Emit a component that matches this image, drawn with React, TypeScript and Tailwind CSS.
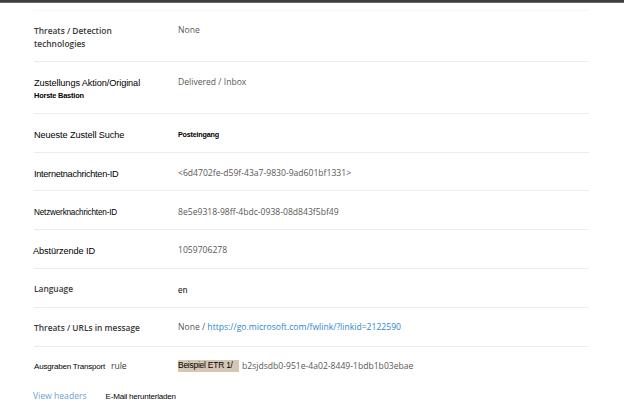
import React from "react";

const seg = "font-['Open_Sans',sans-serif]";
const ari = "font-['Liberation_Sans',Arial,sans-serif]";

function Row({
  h,
  pt,
  border = true,
  label,
  value,
}: {
  h: string;
  pt: string;
  border?: boolean;
  label: React.ReactNode;
  value: React.ReactNode;
}) {
  return (
    <div className={`flex ${h} ${pt} ${border ? "border-b border-[#ececec]" : ""}`}>
      <div className="w-[144px] shrink-0">{label}</div>
      <div className="flex-1">{value}</div>
    </div>
  );
}

export default function App() {
  const lab = `${seg} text-[8.4px] leading-[13px] font-semibold text-[#3b3a39]`;
  const val = `${seg} text-[8.6px] leading-[13px] text-[#5a5856]`;
  return (
    <div className="w-[624px] h-[415px] bg-white overflow-hidden">
      <div className="h-[3px] bg-[#3d3d3d] border-b border-[#6a6a6a]" />
      <div className="ml-[34px] w-[555px] mt-[7px] border-t border-[#f6f6f6]">
        <Row
          h="h-[51px]"
          pt="pt-[13px]"
          label={
            <div className={lab}>
              Threats / Detection
              <br />
              technologies
            </div>
          }
          value={<div className={val}>None</div>}
        />
        <Row
          h="h-[52px]"
          pt="pt-[15px]"
          label={
            <div>
              <div className={`${ari} text-[9.2px] leading-[13px] text-black tracking-[-0.1px]`}>
                Zustellungs Aktion/Original
              </div>
              <div className={`${ari} text-[7.4px] leading-[11px] text-black font-semibold tracking-[-0.2px]`}>
                Horste Bastion
              </div>
            </div>
          }
          value={<div className={`${val} -mt-[1px]`}>Delivered / Inbox</div>}
        />
        <Row
          h="h-[39px]"
          pt="pt-[15px]"
          label={
            <div className={`${ari} text-[9.2px] leading-[13px] text-black tracking-[-0.1px]`}>
              Neueste Zustell Suche
            </div>
          }
          value={
            <div className={`${ari} text-[7.2px] leading-[12px] text-black font-semibold tracking-[-0.2px]`}>
              Posteingang
            </div>
          }
        />
        <Row
          h="h-[38px]"
          pt="pt-[15px]"
          label={
            <div className={`${ari} text-[9.2px] leading-[13px] text-black tracking-[-0.3px]`}>
              Internetnachrichten-ID
            </div>
          }
          value={<div className={`${val} -mt-[1px]`}>&lt;6d4702fe-d59f-43a7-9830-9ad601bf1331&gt;</div>}
        />
        <Row
          h="h-[39px]"
          pt="pt-[15px]"
          label={
            <div className={`${ari} text-[8.2px] leading-[13px] text-black tracking-[-0.2px]`}>
              Netzwerknachrichten-ID
            </div>
          }
          value={<div className={val}>8e5e9318-98ff-4bdc-0938-08d843f5bf49</div>}
        />
        <Row
          h="h-[39px]"
          pt="pt-[15px]"
          label={
            <div className={`${ari} text-[9.2px] leading-[13px] text-black tracking-[-0.1px] -ml-[1px]`}>
              Abstürzende ID
            </div>
          }
          value={<div className={`${val} -mt-[1px]`}>1059706278</div>}
        />
        <Row
          h="h-[39px]"
          pt="pt-[13px]"
          label={<div className={lab}>Language</div>}
          value={
            <div className={`${ari} text-[8.4px] leading-[13px] text-black mt-[2px]`}>en</div>
          }
        />
        <Row
          h="h-[39px]"
          pt="pt-[13px]"
          label={<div className={lab}>Threats / URLs in message</div>}
          value={
            <div className={val}>
              None /{" "}
              <span className="text-[#2f86cf]">https://go.microsoft.com/fwlink/?linkid=2122590</span>
            </div>
          }
        />
        <Row
          h="h-[40px]"
          pt="pt-[13px]"
          border={false}
          label={
            <div className="flex items-center leading-[13px]">
              <span className={`${ari} text-[8px] text-black tracking-[-0.2px]`}>
                Ausgraben Transport
              </span>
              <span className={`${seg} text-[8.6px] text-[#3b3a39] ml-[6px]`}>rule</span>
            </div>
          }
          value={
            <div className="flex items-start">
              <span
                className={`${ari} inline-block w-[61px] h-[12px] bg-[#d6c6b4] text-[8.4px] leading-[9px] text-black tracking-[-0.2px] pt-[1px] whitespace-nowrap`}
              >
                Beispiel ETR 1/
              </span>
              <span className={`${val} ml-[3px]`}>b2sjdsdb0-951e-4a02-8449-1bdb1b03ebae</span>
            </div>
          }
        />
      </div>
      <div className="flex items-center ml-[33px] mt-[3px] leading-[13px]">
        <span className={`${seg} text-[8.6px] text-[#6c9fd2]`}>View headers</span>
        <span className={`${ari} text-[8px] text-black tracking-[-0.2px] ml-[19px]`}>
          E-Mail herunterladen
        </span>
      </div>
    </div>
  );
}
